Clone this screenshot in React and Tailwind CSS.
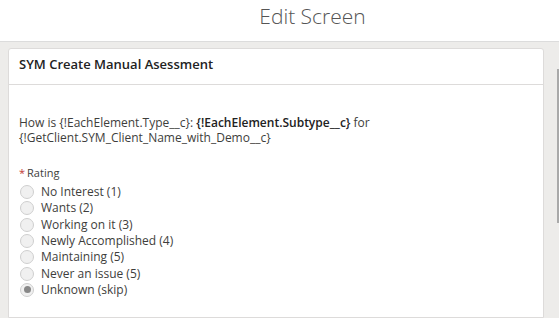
import React from 'react';

const options = [
  'No Interest (1)',
  'Wants (2)',
  'Working on it (3)',
  'Newly Accomplished (4)',
  'Maintaining (5)',
  'Never an issue (5)',
  'Unknown (skip)',
];

const Radio = ({ label, checked }) => (
  <label className="flex items-center h-[16.3px] leading-[14px]">
    <span className="w-[14px] h-[14px] rounded-full border border-[#cfcfcf] bg-[#f0f0f0] flex items-center justify-center mr-[7px] ml-[1px]">
      {checked && <span className="w-[7px] h-[7px] rounded-full bg-[#888]"></span>}
    </span>
    <span>{label}</span>
  </label>
);

export default function App() {
  return (
    <div className="w-[559px] h-[318px] overflow-hidden bg-white flex flex-col text-[#3e3e3c]" style={{ fontFamily: '"Open Sans", sans-serif' }}>
      <div className="h-[41px] flex items-start justify-center shrink-0">
        <h1 className="text-[21px] font-light text-[#555] pl-[66px] pt-[1px]">Edit Screen</h1>
      </div>
      <div className="flex-1 flex bg-[#edecea] border-t border-[#dcdcdc]">
        <div className="flex-1 pl-[8px] pt-[6px]">
          <div className="bg-white border border-[#dddbda] rounded-t-[3px] h-full">
            <div className="h-[36px] border-b border-[#dddbda] flex items-center px-[10px] pb-[3px]">
              <h2 className="text-[13px] font-semibold text-[#222]">SYM Create Manual Asessment</h2>
            </div>
            <div className="px-[10px] pt-[30px] text-[12px] leading-[15px]">
              <p>
                How is {'{!EachElement.Type__c}'}: <span className="font-semibold text-[#222]">{'{!EachElement.Subtype__c}'}</span> for{' '}
                {'{!GetClient.SYM_Client_Name_with_Demo__c}'}
              </p>
              <div className="mt-[21px] text-[11px] leading-[14px] flex items-center">
                <span className="text-[#c23934] mr-[2px]">*</span>Rating
              </div>
              <div className="mt-[4px] text-[12px]">
                {options.map((o, i) => (
                  <Radio key={o} label={o} checked={i === options.length - 1} />
                ))}
              </div>
            </div>
          </div>
        </div>
        <div className="w-[15px] shrink-0 flex justify-end pt-[27px]">
          <div className="w-[2px] h-[154px] bg-[#a9a9a9]"></div>
        </div>
      </div>
    </div>
  );
}
